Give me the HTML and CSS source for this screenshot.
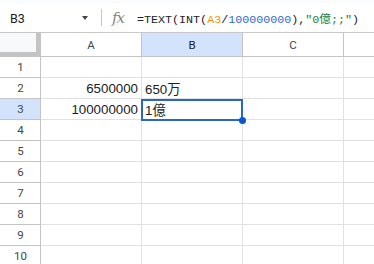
FILE: index.html
```html
<!DOCTYPE html>
<html>
<head>
<meta charset="utf-8">
<link rel="stylesheet" href="styles.css">
</head>
<body>
<div class="strip"></div>
<div class="fbar">
  <div class="namebox">B3</div>
  <div class="caret"></div>
  <div class="sep"></div>
  <div class="fx">fx</div>
  <div class="formula">=TEXT(INT(<span class="ref">A3</span>/<span class="num">100000000</span>),<span class="str">"0億;;"</span>)</div>
</div>
<div class="sheet">
  <div class="grid">
    <div class="corner"></div>
    <div class="ch">A</div>
    <div class="ch sel">B</div>
    <div class="ch">C</div>
    <div class="ch last"></div>

    <div class="rh">1</div><div class="c"></div><div class="c"></div><div class="c"></div><div class="c last"></div>
    <div class="rh">2</div><div class="c r">6500000</div><div class="c">650万</div><div class="c"></div><div class="c last"></div>
    <div class="rh sel">3</div><div class="c r">100000000</div><div class="c">1億</div><div class="c"></div><div class="c last"></div>
    <div class="rh">4</div><div class="c"></div><div class="c"></div><div class="c"></div><div class="c last"></div>
    <div class="rh">5</div><div class="c"></div><div class="c"></div><div class="c"></div><div class="c last"></div>
    <div class="rh">6</div><div class="c"></div><div class="c"></div><div class="c"></div><div class="c last"></div>
    <div class="rh">7</div><div class="c"></div><div class="c"></div><div class="c"></div><div class="c last"></div>
    <div class="rh">8</div><div class="c"></div><div class="c"></div><div class="c"></div><div class="c last"></div>
    <div class="rh">9</div><div class="c"></div><div class="c"></div><div class="c"></div><div class="c last"></div>
    <div class="rh">10</div><div class="c"></div><div class="c"></div><div class="c"></div><div class="c last"></div>
  </div>
  <div class="selection"><div class="handle"></div></div>
</div>
</body>
</html>
```
FILE: styles.css
```css
html, body {
  margin: 0;
  padding: 0;
  background: #fff;
  overflow: hidden;
}
body {
  width: 374px;
  height: 264px;
  font-family: "Liberation Sans", Arial, "Noto Sans CJK JP", sans-serif;
  color: #202124;
}
.strip {
  height: 3px;
  background: #f9fbfd;
}
.fbar {
  height: 29px;
  border-bottom: 1px solid #c7c7c7;
  display: flex;
  align-items: center;
  position: relative;
}
.namebox {
  width: 62px;
  padding-left: 10px;
  font-family: Roboto, "Liberation Sans", sans-serif;
  font-size: 12.5px;
  color: #202124;
  margin-top: 1px;
}
.caret {
  width: 0;
  height: 0;
  border-left: 3.5px solid transparent;
  border-right: 3.5px solid transparent;
  border-top: 4px solid #444746;
  margin-left: 10px;
  margin-top: 1px;
}
.sep {
  width: 1px;
  height: 17px;
  background: #c7c7c7;
  margin-left: 13px;
}
.fx {
  margin-left: 10px;
  width: 22px;
  font-family: "DejaVu Serif", serif;
  font-style: italic;
  font-size: 15px;
  color: #80868b;
  letter-spacing: -1px;
}
.formula {
  margin-left: 3px;
  font-family: "Liberation Mono", "Noto Sans CJK JP", monospace;
  font-size: 11.7px;
  color: #202124;
  white-space: nowrap;
  margin-top: 1px;
}
.ref { color: #f09300; }
.num { color: #3367d6; }
.str { color: #188038; }

.sheet {
  position: relative;
}
.grid {
  display: grid;
  grid-template-columns: 41px 101px 101px 101px 1fr;
  grid-template-rows: 24px repeat(10, 21px);
}
.grid > div {
  box-sizing: border-box;
  border-right: 1px solid #e1e1e1;
  border-bottom: 1px solid #e1e1e1;
}
.grid > .corner {
  background: #f8f9fa;
  border-right: 5px solid #c4c4c4;
  border-bottom: 5px solid #c4c4c4;
}
.grid > .ch {
  border-right-color: #c4c4c4;
  border-bottom-color: #c4c4c4;
  font-family: Roboto, "Liberation Sans", sans-serif;
  font-size: 11.5px;
  color: #444746;
  display: flex;
  align-items: center;
  justify-content: center;
}
.grid > .rh {
  border-right-color: #c4c4c4;
  border-bottom-color: #c4c4c4;
  font-family: Roboto, "Liberation Sans", sans-serif;
  font-size: 11.5px;
  color: #444746;
  display: flex;
  align-items: center;
  justify-content: center;
  padding-left: 1px;
}
.grid > .sel {
  background: #d3e3fd;
}
.grid > .rh.sel { color: #444746; }
.grid > .ch.sel { color: #202124; }
.grid > .last { border-right: none; }
.c {
  font-size: 13.3px;
  display: flex;
  align-items: center;
  padding: 1px 3px 0 3px;
  white-space: nowrap;
}
.c.r {
  justify-content: flex-end;
}
.selection {
  position: absolute;
  left: 141px;
  top: 66px;
  width: 102px;
  height: 22px;
  box-sizing: border-box;
  border: 2px solid #2a66c4;
}
.handle {
  position: absolute;
  right: -5px;
  bottom: -5px;
  width: 7px;
  height: 7px;
  border-radius: 50%;
  background: #0b57d0;
}
```
